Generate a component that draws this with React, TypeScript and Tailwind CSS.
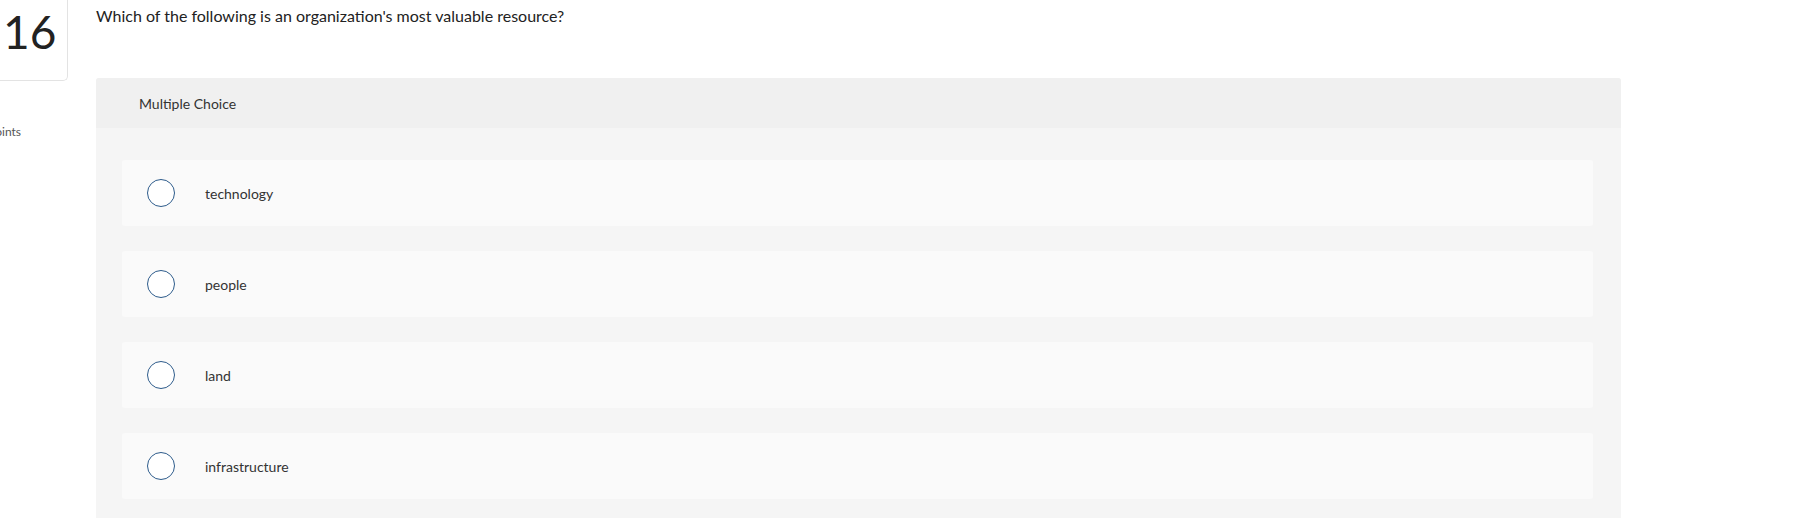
import React from "react";

const options = ["technology", "people", "land", "infrastructure"];

export default function App() {
  return (
    <div className="w-[1806px] h-[518px] overflow-hidden bg-white flex" style={{ fontFamily: "Lato, 'Noto Sans', sans-serif" }}>
      <div className="w-[68px] shrink-0 flex flex-col">
        <div className="h-[81px] border-r border-b border-[#e3e3e3] rounded-br-[5px] flex items-start pt-[9px] pl-[3px]">
          <span className="text-[46px] leading-[46px] font-normal text-[#222]" style={{ fontFamily: "Lato, sans-serif" }}>16</span>
        </div>
        <div className="w-[21px] overflow-hidden flex justify-end mt-[43px]">
          <span className="text-[12px] leading-[16px] text-[#555] whitespace-nowrap">1 points</span>
        </div>
      </div>
      <div className="ml-[28px] w-[1525px] flex flex-col">
        <div className="h-[78px] pt-[4px]">
          <p className="text-[16px] leading-[24px] text-[#222]">Which of the following is an organization's most valuable resource?</p>
        </div>
        <div className="flex-1 bg-[#f5f5f5] rounded-t-[3px] flex flex-col">
          <div className="h-[50px] bg-[#f0f0f0] rounded-t-[3px] flex items-center pl-[43px]">
            <span className="text-[14px] text-[#333]">Multiple Choice</span>
          </div>
          <div className="pl-[26px] pr-[28px] pt-[32px] flex flex-col gap-[25px]">
            {options.map((o) => (
              <div key={o} className="h-[66px] bg-[#fafafa] rounded-[3px] flex items-center pl-[25px]">
                <div className="w-[28px] h-[28px] rounded-full border-[1.5px] border-[#2d5b8b] bg-white shrink-0" />
                <span className="ml-[30px] text-[14px] text-[#333]">{o}</span>
              </div>
            ))}
          </div>
        </div>
      </div>
    </div>
  );
}
